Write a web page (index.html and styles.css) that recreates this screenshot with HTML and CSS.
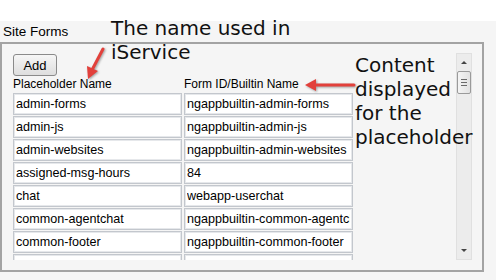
FILE: index.html
```html
<!DOCTYPE html>
<html lang="en">
<head>
    <meta charset="UTF-8">
    <title>Site Forms</title>
    <link rel="stylesheet" href="styles.css">
</head>
<body>
    <div class="page">
        <div class="legend">Site Forms</div>

        <div class="frame">
            <div class="scroller">
                <div class="content">
                    <button class="add-btn">Add</button>
                    <div class="grid">
                        <div class="head">Placeholder Name</div>
                        <div class="head">Form ID/Builtin Name</div>

                        <input class="cell" value="admin-forms">
                        <input class="cell" value="ngappbuiltin-admin-forms">
                        <input class="cell" value="admin-js">
                        <input class="cell" value="ngappbuiltin-admin-js">
                        <input class="cell" value="admin-websites">
                        <input class="cell" value="ngappbuiltin-admin-websites">
                        <input class="cell" value="assigned-msg-hours">
                        <input class="cell" value="84">
                        <input class="cell" value="chat">
                        <input class="cell" value="webapp-userchat">
                        <input class="cell" value="common-agentchat">
                        <input class="cell" value="ngappbuiltin-common-agentchat">
                        <input class="cell" value="common-footer">
                        <input class="cell" value="ngappbuiltin-common-footer">
                        <input class="cell" value="common-header">
                        <input class="cell" value="ngappbuiltin-common-header">
                    </div>
                </div>

                <!-- fake scrollbar -->
                <div class="scrollbar">
                    <div class="sb-arrow up"></div>
                    <div class="sb-thumb"><span></span><span></span><span></span></div>
                    <div class="sb-track"></div>
                    <div class="sb-arrow down"></div>
                </div>
            </div>
        </div>
    </div>

    <!-- annotations drawn over the screenshot -->
    <div class="note note-name">The name used in<br>iService</div>
    <div class="note note-content">Content<br>displayed<br>for the<br>placeholder</div>

    <svg class="arrow arrow-name" width="40" height="40" viewBox="0 0 40 40">
        <line x1="31" y1="4" x2="20" y2="25" />
        <polygon points="16,34 15,21 26,26" />
    </svg>
    <svg class="arrow arrow-content" width="60" height="20" viewBox="0 0 60 20">
        <line x1="54" y1="10" x2="14" y2="10" />
        <polygon points="5,10 16,4 16,16" />
    </svg>
</body>
</html>
```

FILE: styles.css
```css
body {
    margin: 0;
    background-color: #fff;
    font-family: "Liberation Sans", Arial, sans-serif;
    width: 496px;
    height: 280px;
    overflow: hidden;
}
.page {
    margin-top: 21px;
    height: 259px;
    background-color: #f5f5f5;
}
.legend {
    font-size: 13.5px;
    line-height: 21px;
    padding-left: 3px;
    color: #000;
}
.frame {
    width: 472px;
    height: 217px;
    border: 2px solid #a3a3a3;
    padding-top: 9px;
    padding-left: 8px;
}
.scroller {
    display: flex;
    width: 462px;
    height: 207px;
}
.content {
    flex: 1;
    overflow: hidden;
    padding-left: 3px;
    padding-top: 1px;
}
.add-btn {
    display: block;
    width: 44px;
    height: 22px;
    padding: 0;
    font-family: "Liberation Sans", Arial, sans-serif;
    font-size: 13px;
    color: #000;
    border: 1px solid #8a8a8a;
    border-radius: 3px;
    background: linear-gradient(#f6f6f6, #dedede);
}
.grid {
    display: grid;
    grid-template-columns: 169px 169px;
    column-gap: 2px;
    row-gap: 1px;
}
.head {
    font-size: 12px;
    line-height: 16px;
    color: #000;
}
.cell {
    height: 22px;
    width: 169px;
    box-sizing: border-box;
    border: 1px solid #c3c7cd;
    box-shadow: inset 0 0 0 1px #e6e8eb;
    background-color: #fff;
    padding: 0 2px;
    font-family: "Liberation Sans", Arial, sans-serif;
    font-size: 12.6px;
    color: #000;
    margin: 0;
}
.scrollbar {
    width: 16px;
    display: flex;
    flex-direction: column;
    background-color: #ececec;
    border: 1px solid #e0e0e0;
    box-sizing: border-box;
}
.sb-arrow {
    height: 16px;
    position: relative;
}
.sb-arrow::after {
    content: "";
    position: absolute;
    left: 4px;
    width: 0;
    height: 0;
    border-left: 3px solid transparent;
    border-right: 3px solid transparent;
}
.sb-arrow.up::after {
    top: 7px;
    border-bottom: 3px solid #444;
}
.sb-arrow.down::after {
    top: 6px;
    border-top: 3px solid #444;
}
.sb-thumb {
    height: 21px;
    margin: 1px 0;
    border: 1px solid #9a9a9a;
    border-radius: 2px;
    background: linear-gradient(90deg, #f4f4f4, #e2e2e2);
    display: flex;
    flex-direction: column;
    justify-content: center;
    align-items: center;
    gap: 2px;
}
.sb-thumb span {
    width: 6px;
    height: 1px;
    background-color: #6a6a6a;
}
.sb-track {
    flex: 1;
}
.note {
    position: absolute;
    font-family: "DejaVu Sans", Verdana, sans-serif;
    font-size: 20px;
    line-height: 24px;
    color: #111;
}
.note-name {
    left: 111px;
    top: 16px;
}
.note-content {
    left: 355px;
    top: 53px;
}
.arrow {
    position: absolute;
    filter: drop-shadow(1px 1px 1px rgba(0, 0, 0, 0.35));
}
.arrow line {
    stroke: #e2403b;
    stroke-width: 3;
    stroke-linecap: round;
}
.arrow polygon {
    fill: #e2403b;
}
.arrow-name {
    left: 72px;
    top: 45px;
}
.arrow-content {
    left: 300px;
    top: 75px;
}
```
